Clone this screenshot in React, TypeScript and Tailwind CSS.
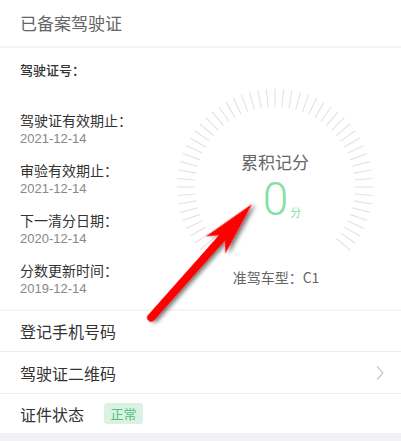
import React from "react";

const font = { fontFamily: '"Noto Sans CJK SC", "Noto Sans", sans-serif' };

function Gauge() {
  const ticks: React.ReactNode[] = [];
  const cx = 105;
  const cy = 105;
  const rOut = 98;
  const rIn = 80;
  for (let a = -130; a <= 130.01; a += 5) {
    const rad = (a * Math.PI) / 180;
    const s = Math.sin(rad);
    const c = Math.cos(rad);
    ticks.push(
      <line
        key={a}
        x1={cx + s * rIn}
        y1={cy - c * rIn}
        x2={cx + s * rOut}
        y2={cy - c * rOut}
        stroke="#e2e2e2"
        strokeWidth={1.1}
      />
    );
  }
  return (
    <div className="relative w-[210px] h-[210px] mt-[34px] mr-[21px] shrink-0">
      <svg className="absolute inset-0" width="210" height="210" viewBox="0 0 210 210">
        {ticks}
      </svg>
      <div className="relative flex flex-col items-center pt-[68px]">
        <div className="text-[17px] leading-[24px] text-[#666]">累积记分</div>
        <div className="flex items-end mt-[2px] ml-[14px]">
          <span
            className="text-[46px] leading-[46px] font-light text-[#86dfa4]"
            style={{ fontFamily: 'Roboto, "Liberation Sans", sans-serif', fontWeight: 300 }}
          >
            0
          </span>
          <span className="text-[11px] leading-[16px] text-[#86dfa4] ml-[2px] mb-[2px]">分</span>
        </div>
        <div className="mt-[45px] text-[14px] leading-[20px] text-[#666] ml-[2px]">准驾车型：C1</div>
      </div>
    </div>
  );
}

function Arrow() {
  return (
    <svg
      className="absolute left-0 top-0 pointer-events-none"
      width="401"
      height="441"
      viewBox="0 0 401 441"
    >
      <defs>
        <filter id="sh" x="-20%" y="-20%" width="140%" height="140%">
          <feDropShadow dx="2" dy="3" stdDeviation="2" floodColor="#000" floodOpacity="0.55" />
        </filter>
      </defs>
      <g transform="translate(252 204) rotate(-48.4)" filter="url(#sh)">
        <line x1="-152" y1="0" x2="-44" y2="0" stroke="#ff0000" strokeWidth="8" strokeLinecap="round" />
        <polygon points="0,0 -55,-13 -44,-3 -44,3 -55,13" fill="#ff0000" />
      </g>
    </svg>
  );
}

const items = [
  ["驾驶证有效期止：", "2021-12-14"],
  ["审验有效期止：", "2021-12-14"],
  ["下一清分日期：", "2020-12-14"],
  ["分数更新时间：", "2019-12-14"],
];

export default function App() {
  return (
    <div className="relative w-[401px] h-[441px] bg-[#f2f2f6] overflow-hidden" style={font}>
      <div className="bg-white">
        <div className="h-[46px] flex items-center px-5 text-[17px] text-[#666]">已备案驾驶证</div>
        <div className="h-[2px] bg-[#f6f6f6]" />
        <div className="flex h-[261px]">
          <div className="flex-1 pl-5 pt-[12px]">
            <div className="text-[13px] leading-[19px] text-[#333] font-medium">驾驶证号：</div>
            <div className="mt-[31px] flex flex-col gap-[12px]">
              {items.map(([l, d]) => (
                <div key={l}>
                  <div className="text-[14px] leading-[20px] text-[#333]">{l}</div>
                  <div
                    className="text-[13px] leading-[18px] text-[#888]"
                    style={{ fontFamily: '"Liberation Sans", "Noto Sans CJK SC", sans-serif' }}
                  >
                    {d}
                  </div>
                </div>
              ))}
            </div>
          </div>
          <Gauge />
        </div>
        <div className="h-[2px] bg-[#f6f6f6]" />
        <div className="h-[41px] flex items-center px-5 text-[16px] text-[#333] border-b border-[#eeeeee]">
          登记手机号码
        </div>
        <div className="h-[42px] flex items-center px-5 text-[16px] text-[#333] border-b border-[#eeeeee]">
          <span className="flex-1">驾驶证二维码</span>
          <svg width="10" height="16" viewBox="0 0 10 16" className="mr-[-4px]">
            <polyline points="2,1.5 8,8 2,14.5" fill="none" stroke="#c8c8cc" strokeWidth="1.2" />
          </svg>
        </div>
        <div className="h-[39px] flex items-center px-5 text-[16px] text-[#333]">
          <span>证件状态</span>
          <span className="ml-[20px] h-[21px] w-[39px] flex items-center justify-center rounded-[3px] bg-[#d9f2e2] text-[13px] text-[#52c07e]">
            正常
          </span>
        </div>
      </div>
      <Arrow />
    </div>
  );
}
